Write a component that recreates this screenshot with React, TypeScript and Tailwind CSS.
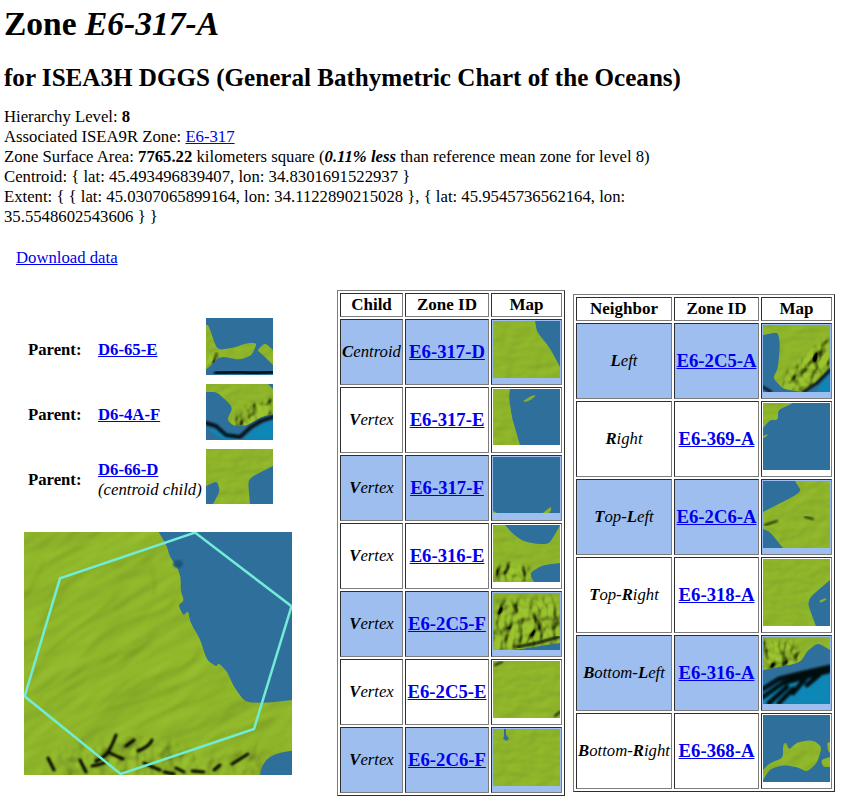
import React from "react";

const SEA = "#2e6f9b";
const LAND = "#8db329";

interface MapArt {
  id: string;
  w?: number;
  h: number;
  land: string;
  deep?: string;
  rough?: string;
  band?: string;
  bandWidth?: number;
  dark?: string;
  seed?: number;
}

// rounds the corners of a coast, but keeps points that sit on the picture's edge sharp
function smooth(d: string, w: number, h: number) {
  return d
    .split("Z")
    .filter((s) => s.trim())
    .map((sub) => {
      const n = (sub.match(/-?[\d.]+/g) || []).map(Number);
      const pts: number[][] = [];
      for (let i = 0; i < n.length; i += 2) pts.push([n[i], n[i + 1]]);
      const toward = (a: number[], b: number[]) => `${a[0] + (b[0] - a[0]) * 0.3} ${a[1] + (b[1] - a[1]) * 0.3}`;
      let out = "";
      pts.forEach((p, i) => {
        const prev = pts[(i + pts.length - 1) % pts.length];
        const next = pts[(i + 1) % pts.length];
        const edge = p[0] <= 0 || p[1] <= 0 || p[0] >= w || p[1] >= h;
        const cmd = i === 0 ? "M" : "L";
        out += edge ? `${cmd}${p[0]} ${p[1]}` : `${cmd}${toward(p, prev)}Q${p[0]} ${p[1]} ${toward(p, next)}`;
      });
      return out + "Z";
    })
    .join("");
}

function ZoneMap({ id, w = 67, h, land, deep, rough, band, bandWidth = 3, dark, seed = 2 }: MapArt) {
  const coast = smooth(land, w, h);
  return (
    <svg width={w} height={h} viewBox={`0 0 ${w} ${h}`} className="block">
      <defs>
        <filter id={`relief-${id}`} x="0" y="0" width="1" height="1">
          <feTurbulence type="fractalNoise" baseFrequency="0.06 0.09" numOctaves={2} seed={seed} />
          <feGaussianBlur stdDeviation="0.6" result="n" />
          <feDiffuseLighting in="n" surfaceScale={1.1} diffuseConstant={1.16} lightingColor={LAND} result="l">
            <feDistantLight azimuth={225} elevation={60} />
          </feDiffuseLighting>
          <feComposite in="l" in2="SourceAlpha" operator="in" />
        </filter>
        <filter id={`rough-${id}`} x="0" y="0" width="1" height="1">
          <feTurbulence type="fractalNoise" baseFrequency="0.09 0.07" numOctaves={2} seed={seed + 20} result="n" />
          <feDiffuseLighting in="n" surfaceScale={8} diffuseConstant={1.26} lightingColor={LAND} result="l">
            <feDistantLight azimuth={215} elevation={50} />
          </feDiffuseLighting>
          <feComposite in="l" in2="SourceAlpha" operator="in" />
        </filter>
        <filter id={`soft-${id}`} x="-10%" y="-10%" width="120%" height="120%">
          <feGaussianBlur stdDeviation="0.9" />
        </filter>
        <filter id={`wide-${id}`} x="-10%" y="-10%" width="120%" height="120%">
          <feGaussianBlur stdDeviation="2.5" />
        </filter>
        <clipPath id={`clip-${id}`}>
          <path d={coast} />
        </clipPath>
        {rough && (
          <mask id={`mask-${id}`}>
            <path d={rough} fill="#fff" filter={`url(#wide-${id})`} />
          </mask>
        )}
      </defs>
      <rect width={w} height={h} fill={SEA} />
      {deep && <path d={deep} fill="#0d87b5" filter={`url(#soft-${id})`} />}
      <path d={coast} fill="#000" filter={`url(#relief-${id})`} />
      {rough && (
        <g clipPath={`url(#clip-${id})`}>
          <g mask={`url(#mask-${id})`}>
            <rect width={w} height={h} fill="#000" filter={`url(#rough-${id})`} />
          </g>
        </g>
      )}
      {band && (
        <path d={band} fill="none" stroke="#030708" strokeWidth={bandWidth} strokeLinecap="round" strokeLinejoin="round" filter={`url(#soft-${id})`} />
      )}
      {dark && (
        <path d={dark} fill="none" stroke="#050a05" strokeWidth={1.8} strokeLinecap="round" filter={`url(#soft-${id})`} />
      )}
    </svg>
  );
}

// ridge lines of the large map, drawn twice below for a lit side and a shaded side
const RIDGES =
  "M6 140Q28 112 46 100T92 62M14 92Q30 70 38 56T72 32M50 40Q72 30 96 28M60 120Q84 92 116 84T150 64M20 170Q48 150 72 140T124 108M80 176Q108 150 140 140T172 118M44 196Q74 176 104 170T150 152M110 196Q138 176 168 168T200 152M150 204Q176 192 206 178M120 24Q130 40 128 60M24 30Q38 20 56 12M2 60Q10 44 18 30M186 206Q214 194 246 186M100 120Q112 106 130 100";

function BigMap() {
  const coast = smooth(
    "M134.7 0L142.7 13.7L146 25.3L152.7 33.7L156.7 45.3L156.7 58.7L160 68.7L154.3 73L159.3 83.7L164.3 78.7L166 90L176 106.7L182.7 128L192.7 134.7L194.3 131L202.7 138.7L209.3 153.7L221 170.3L242.7 171L268 168L268 243L0 243L0 0Z",
    268,
    243
  );
  return (
    <svg width={268} height={243} viewBox="0 0 268 243" className="block">
      <defs>
        <filter id="big-relief" x="0" y="0" width="1" height="1">
          <feTurbulence type="fractalNoise" baseFrequency="0.011 0.034" numOctaves={3} seed={7} />
          <feGaussianBlur stdDeviation="1" result="n" />
          <feDiffuseLighting in="n" surfaceScale={3.6} diffuseConstant={1.16} lightingColor={LAND} result="l">
            <feDistantLight azimuth={250} elevation={62} />
          </feDiffuseLighting>
          <feComposite in="l" in2="SourceAlpha" operator="in" />
        </filter>
        <filter id="big-rough" x="0" y="0" width="1" height="1">
          <feTurbulence type="fractalNoise" baseFrequency="0.035 0.03" numOctaves={3} seed={11} result="n" />
          <feDiffuseLighting in="n" surfaceScale={9} diffuseConstant={1.2} lightingColor={LAND} result="l">
            <feDistantLight azimuth={215} elevation={56} />
          </feDiffuseLighting>
          <feComposite in="l" in2="SourceAlpha" operator="in" />
        </filter>
        <filter id="big-soft" x="-10%" y="-10%" width="120%" height="120%">
          <feGaussianBlur stdDeviation="1.3" />
        </filter>
        <filter id="big-ridge" x="-10%" y="-10%" width="120%" height="120%">
          <feGaussianBlur stdDeviation="2" />
        </filter>
        <filter id="big-wide" x="-10%" y="-10%" width="120%" height="120%">
          <feGaussianBlur stdDeviation="8" />
        </filter>
        <clipPath id="big-coast">
          <path d={coast} />
        </clipPath>
        <mask id="big-mask">
          <path d="M10 243L40 218L100 208L150 212L190 232L215 222L250 212L240 243Z" fill="#fff" filter="url(#big-wide)" />
        </mask>
      </defs>
      <rect width="268" height="243" fill={SEA} />
      <g clipPath="url(#big-coast)">
        <rect x="-100" y="-150" width="500" height="560" fill="#000" filter="url(#big-relief)" transform="rotate(-28 134 120)" />
        <path d={RIDGES} fill="none" stroke="#65891a" strokeWidth={2.4} strokeLinecap="round" opacity={0.4} filter="url(#big-ridge)" transform="translate(1 2)" />
        <path d={RIDGES} fill="none" stroke="#a6cb3a" strokeWidth={2.2} strokeLinecap="round" opacity={0.35} filter="url(#big-ridge)" transform="translate(-1 -2)" />
        <g mask="url(#big-mask)">
          <rect width="268" height="243" fill="#000" filter="url(#big-rough)" />
        </g>
        <path
          d="M92 203Q88 214 84 220T72 229M68 234Q76 233 82 230M128 208Q126 214 114 219M86 221Q92 224 99 227M120 231Q128 235 136 238M140 240L150 242M168 239L180 240M62 240L56 228M102 214L110 208M152 236L160 240M190 238L196 233M208 232L224 222M30 238L24 226"
          fill="none"
          stroke="#020402"
          strokeWidth={3}
          strokeLinecap="round"
          filter="url(#big-soft)"
        />
      </g>
      <path d="M236 243Q238 230 246 225T268 218.7L268 243Z" fill={SEA} />
      <ellipse cx="154" cy="32" rx="5" ry="4" fill="#1f557c" filter="url(#big-soft)" />
      <polygon points="171,0.6 267.5,74.3 230,197 96.7,242 0.6,164.3 36,46.3" fill="none" stroke="#72ecd6" strokeWidth={2.5} />
    </svg>
  );
}

const parents: { code: string; note?: string; art: MapArt }[] = [
  {
    code: "D6-65-E",
    art: {
      id: "p1",
      h: 57,
      land: "M0 7L2.5 7L11 32L27 30L41 25L51 25L46 37L34 42L14 38L2 50L0 51ZM51 32L59 25L67 32L67 47L57 37Z",
      rough: "M0 36L12 36L14 52L0 52Z",
      band: "M10 55L30 54L48 55L67 54",
      bandWidth: 4,
    },
  },
  {
    code: "D6-4A-F",
    art: {
      id: "p2",
      h: 56,
      land: "M0 0L62 0L67 5L67 30L55 33L40 42L28 42L21 36L27 23L11 8L0 8Z",
      deep: "M0 44L18 56L67 56L67 36L50 43L36 56L20 48Z",
      rough: "M24 42L34 26L60 14L67 18L67 32L40 44Z",
      band: "M0 39L10 42L20 51L34 53L45 43L55 37L67 33",
      bandWidth: 3.4,
      seed: 4,
    },
  },
  {
    code: "D6-66-D",
    note: "(centroid child)",
    art: {
      id: "p3",
      h: 55,
      land: "M0 0L67 0L67 17L47 27L42 32L44 55L7 55L14 42L11 32L0 37Z",
      seed: 5,
    },
  },
];

const children: { label: React.ReactNode; code: string; art: MapArt }[] = [
  {
    label: <><b>C</b>entroid</>,
    code: "E6-317-D",
    art: { id: "c1", h: 57, land: "M0 0L42 0L44 11L57 27L67 46L67 57L0 57Z", seed: 7 },
  },
  {
    label: <><b>V</b>ertex</>,
    code: "E6-317-E",
    art: { id: "c2", h: 56, land: "M0 0L17 0L16 9L19 29L27 56L0 56ZM30 12L38 7L43 6L38 11L32 13Z", seed: 8 },
  },
  {
    label: <><b>V</b>ertex</>,
    code: "E6-317-F",
    art: { id: "c3", h: 56, land: "M50 56L56 51L58 50L58 54L56 56ZM0 54L4 56L0 56Z", seed: 9 },
  },
  {
    label: <><b>V</b>ertex</>,
    code: "E6-316-E",
    art: {
      id: "c4",
      h: 57,
      land: "M0 0L12 0L20 9L30 16L43 19L56 19L64 6L67 0L67 38L50 40L38 47L38 52L41 57L0 57Z",
      rough: "M0 44L14 38L36 42L36 57L0 57Z",
      seed: 10,
    },
  },
  {
    label: <><b>V</b>ertex</>,
    code: "E6-2C5-F",
    art: {
      id: "c5",
      h: 57,
      land: "M0 0L67 0L67 50L40 54L20 57L0 57Z",
      rough: "M4 8L60 4L67 20L67 50L30 57L0 57Z",
      band: "M24 54L44 50L66 44",
      bandWidth: 2.4,
      seed: 11,
    },
  },
  {
    label: <><b>V</b>ertex</>,
    code: "E6-2C5-E",
    art: { id: "c6", h: 57, land: "M0 0L67 0L67 57L0 57Z", dark: "M62 55L67 51M2 4L9 1", seed: 12 },
  },
  {
    label: <><b>V</b>ertex</>,
    code: "E6-2C6-F",
    art: { id: "c7", h: 57, land: "M0 0L11 0L11 7L10 10L14 12L16 9L13 6L13 0L67 0L67 57L0 57Z", seed: 13 },
  },
];

const neighbors: { label: React.ReactNode; code: string; art: MapArt }[] = [
  {
    label: <><b>L</b>eft</>,
    code: "E6-2C5-A",
    art: {
      id: "n1",
      h: 67,
      land: "M0 0L67 0L67 43L54 57L40 67L20 64L10 53L15 43L17 20L15 7L0 10Z",
      deep: "M52 67L67 48L67 67Z",
      rough: "M18 60L30 40L50 24L66 10L67 40L50 62L30 67Z",
      band: "M0 62L8 67M40 67L54 58L67 45",
      bandWidth: 2.6,
      seed: 14,
    },
  },
  {
    label: <><b>R</b>ight</>,
    code: "E6-369-A",
    art: { id: "n2", h: 67, land: "M0 0L30 0L15 7L15 17L7 17L0 25ZM0 33L5 31L3 34L0 35Z", seed: 15 },
  },
  {
    label: <><b>T</b>op-<b>L</b>eft</>,
    code: "E6-2C6-A",
    art: {
      id: "n3",
      h: 67,
      land: "M0 31L39 11L32 0L67 0L67 67L20 67L7 51L0 48Z",
      dark: "M2 44L14 40M42 36L50 38",
      seed: 16,
    },
  },
  {
    label: <><b>T</b>op-<b>R</b>ight</>,
    code: "E6-318-A",
    art: {
      id: "n4",
      h: 67,
      land: "M0 0L67 0L67 21L47 38L45 46L53 67L0 67ZM56 42L62 39L64 40L58 44Z",
      seed: 17,
    },
  },
  {
    label: <><b>B</b>ottom-<b>L</b>eft</>,
    code: "E6-316-A",
    art: {
      id: "n5",
      h: 67,
      land: "M0 0L67 0L67 13L55 6L45 13L37 26L0 33Z",
      deep: "M0 46L30 38L67 32L67 67L0 67Z",
      rough: "M0 4L30 4L40 20L30 30L0 34Z",
      band: "M0 52L16 42L36 37L67 30M0 60L20 46L42 40L66 34M6 66L24 50M16 66L30 52M30 56L42 42M44 48L56 38",
      bandWidth: 4.5,
      seed: 18,
    },
  },
  {
    label: <><b>B</b>ottom-<b>R</b>ight</>,
    code: "E6-368-A",
    art: {
      id: "n6",
      h: 67,
      land: "M0 65L0 55L7 48L20 43L20 30L23 27L26 35L34 27L50 25L59 32L54 48L44 57L34 52L20 50L7 54ZM64 28L67 27L67 38L65 36ZM58 45L67 42L67 52L60 52Z",
      seed: 19,
    },
  },
];

const cellBorder = "border border-t-[#2e2e2e] border-l-[#2e2e2e] border-b-[#7c7c7c] border-r-[#7c7c7c] p-px";
const tableBorder =
  "table-fixed border-separate border-spacing-[2px] border border-t-[#7c7c7c] border-l-[#7c7c7c] border-b-[#2e2e2e] border-r-[#2e2e2e]";

function ZoneTable({
  title,
  rows,
  rowClass,
  firstCol,
  idCol,
  tableWidth,
}: {
  title: string;
  rows: { label: React.ReactNode; code: string; art: MapArt }[];
  rowClass: string;
  firstCol: number;
  idCol: number;
  tableWidth: string;
}) {
  return (
    <table className={`${tableBorder} ${tableWidth}`}>
      <colgroup>
        <col width={firstCol} />
        <col width={idCol} />
        <col width={71} />
      </colgroup>
      <thead>
        <tr>
          {[title, "Zone ID", "Map"].map((h) => (
            <th key={h} className={`${cellBorder} h-[24px] text-center text-[17px] leading-[20px] font-bold`}>
              {h}
            </th>
          ))}
        </tr>
      </thead>
      <tbody>
        {rows.map((row, i) => (
          <tr key={row.code} className={i % 2 === 0 ? "bg-[#9dbeee]" : "bg-white"}>
            <td className={`${cellBorder} ${rowClass} text-center text-[16.72px] italic whitespace-nowrap`}>{row.label}</td>
            <td className={`${cellBorder} text-center text-[18.7px] font-bold whitespace-nowrap`}>
              <a href="#" className="text-[#0000ee] underline">
                {row.code}
              </a>
            </td>
            <td className={`${cellBorder} align-top`}>
              <ZoneMap {...row.art} />
            </td>
          </tr>
        ))}
      </tbody>
    </table>
  );
}

export default function App() {
  return (
    <div className="w-[849px] h-[804px] overflow-hidden bg-white text-black font-['Liberation_Serif',serif]">
      <div className="pl-[4px] pt-[5px]">
        <h1 className="text-[33.5px] leading-[37px] font-bold">
          Zone <em>E6-317-A</em>
        </h1>
        <h2 className="mt-[22px] text-[25.1px] leading-[28px] font-bold">
          for ISEA3H DGGS (General Bathymetric Chart of the Oceans)
        </h2>
        <div className="mt-[15px] w-[670px] text-[16.72px] leading-[20px]">
          <div>
            Hierarchy Level: <b>8</b>
          </div>
          <div>
            Associated ISEA9R Zone:{" "}
            <a href="#" className="text-[#0000ee] underline">
              E6-317
            </a>
          </div>
          <div>
            Zone Surface Area: <b>7765.22</b> kilometers square (
            <b>
              <em>0.11% less</em>
            </b>{" "}
            than reference mean zone for level 8)
          </div>
          <div>Centroid: &#123; lat: 45.493496839407, lon: 34.8301691522937 &#125;</div>
          <div>
            Extent: &#123; &#123; lat: 45.0307065899164, lon: 34.1122890215028 &#125;, &#123; lat: 45.9545736562164, lon:
            35.5548602543606 &#125; &#125;
          </div>
        </div>
        <p className="mt-[21px] ml-[12px] text-[16.72px] leading-[20px]">
          <a href="#" className="text-[#0000ee] underline">
            Download data
          </a>
        </p>
      </div>

      <div className="mt-[22px] flex items-center">
        <div className="w-[337px] shrink-0 self-start pt-[28px]">
          <div className="flex flex-col gap-[9px] pl-[28px]">
            {parents.map((p) => (
              <div key={p.code} className="flex items-center">
                <b className="w-[70px] pt-[6px] text-[16.72px]">Parent:</b>
                <div className="w-[108px] pt-[6px] text-[16.72px] leading-[20px]">
                  <a href="#" className="font-bold text-[#0000ee] underline">
                    {p.code}
                  </a>
                  {p.note && <div className="italic whitespace-nowrap">{p.note}</div>}
                </div>
                <ZoneMap {...p.art} />
              </div>
            ))}
          </div>
          <div className="mt-[28px] ml-[24px]">
            <BigMap />
          </div>
        </div>
        <ZoneTable title="Child" rows={children} rowClass="h-[66px]" firstCol={63} idCol={84} tableWidth="w-[228px]" />
        <div className="ml-[8px]">
          <ZoneTable title="Neighbor" rows={neighbors} rowClass="h-[76px]" firstCol={96} idCol={85} tableWidth="w-[262px]" />
        </div>
      </div>
    </div>
  );
}
